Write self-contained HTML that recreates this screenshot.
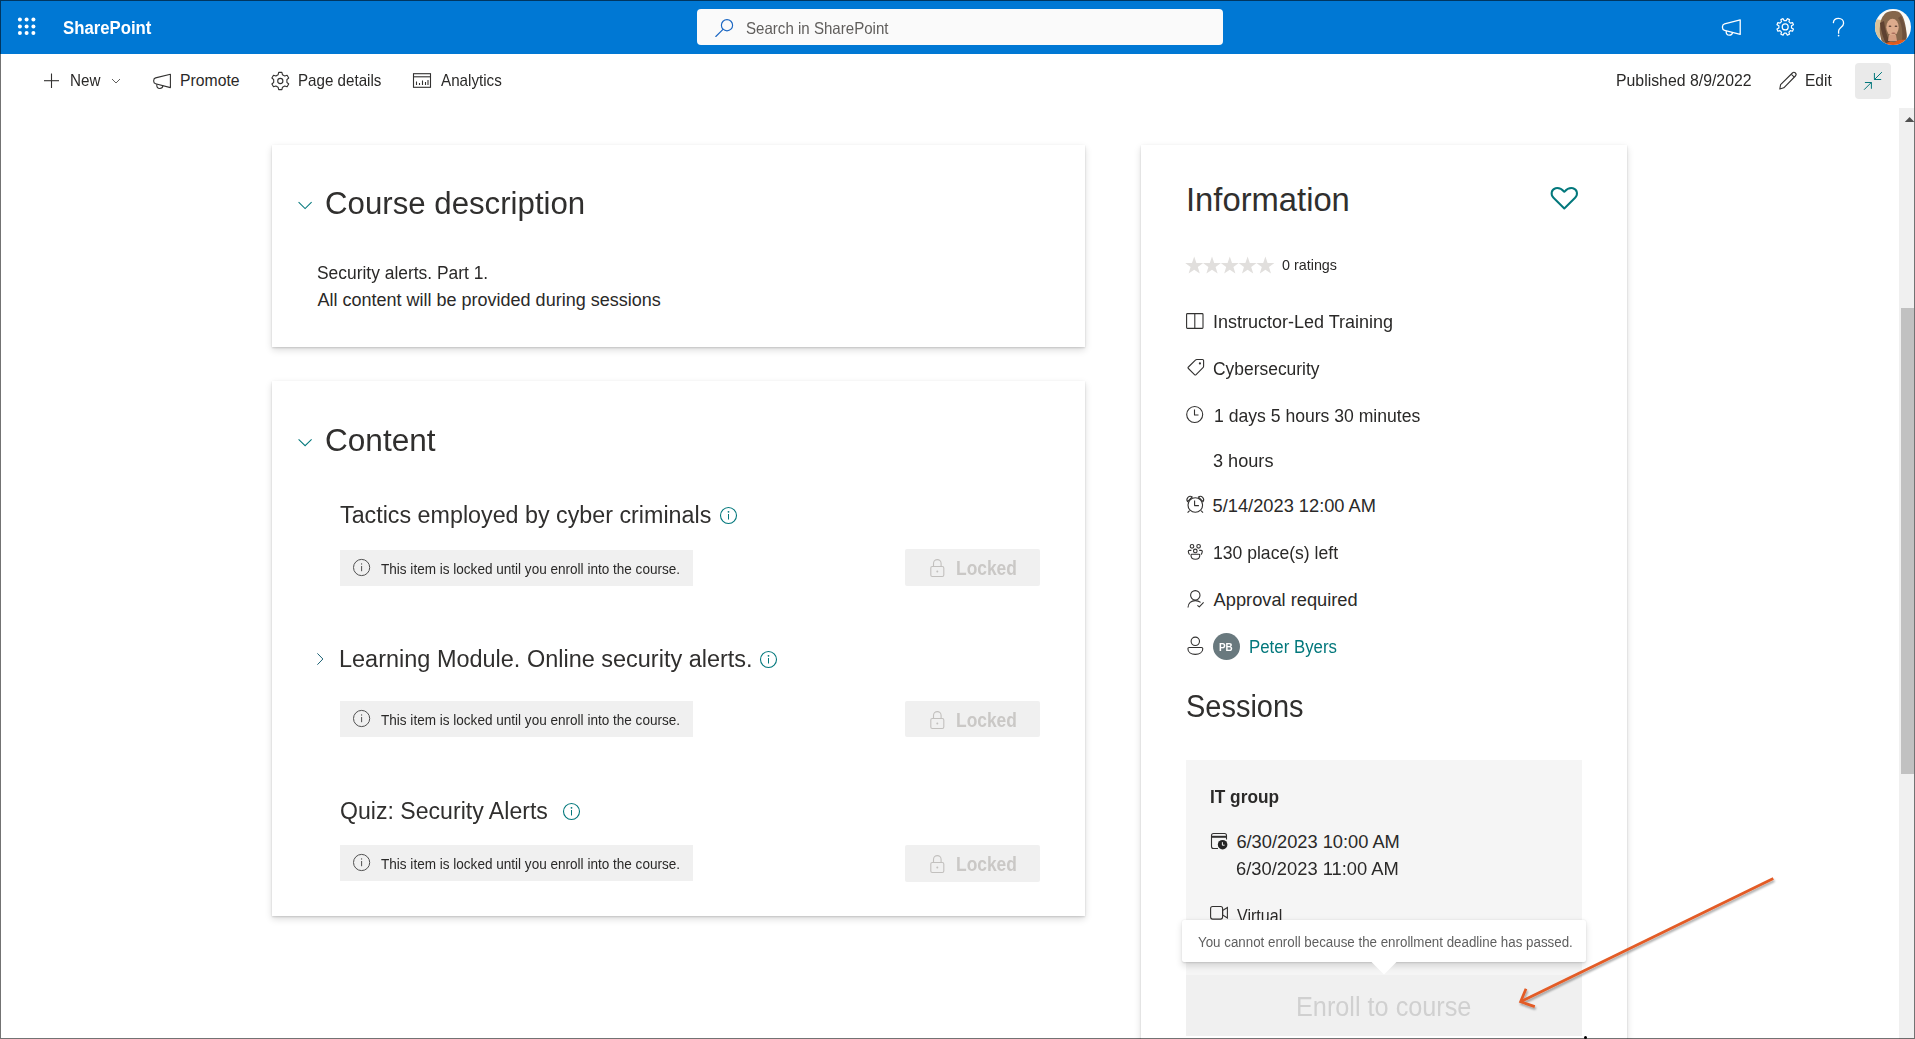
<!DOCTYPE html>
<html>
<head>
<meta charset="utf-8">
<style>
html,body{margin:0;padding:0;}
body{width:1915px;height:1039px;overflow:hidden;position:relative;background:#fff;font-family:"Liberation Sans",sans-serif;}
.a{position:absolute;}
.t{position:absolute;white-space:nowrap;line-height:1;font-family:"Liberation Sans",sans-serif;transform-origin:0 0;}
svg{position:absolute;overflow:visible;}
.card{position:absolute;background:#fff;box-shadow:0 3.2px 7.2px rgba(0,0,0,.14),0 0.6px 1.8px rgba(0,0,0,.15);}
.banner{position:absolute;background:#F0F0F0;}
.lockbtn{position:absolute;background:#F0F0F0;border-radius:2px;}
</style>
</head>
<body>
<!-- header -->
<div class="a" style="left:0;top:0;width:1915px;height:54px;background:#0078D4"></div>
<svg style="left:0;top:0" width="60" height="54">
  <g fill="#fff">
    <circle cx="19.9" cy="19.6" r="2"/><circle cx="26.6" cy="19.6" r="2"/><circle cx="33.4" cy="19.6" r="2"/>
    <circle cx="19.9" cy="26.4" r="2"/><circle cx="26.6" cy="26.4" r="2"/><circle cx="33.4" cy="26.4" r="2"/>
    <circle cx="19.9" cy="33.1" r="2"/><circle cx="26.6" cy="33.1" r="2"/><circle cx="33.4" cy="33.1" r="2"/>
  </g>
</svg>
<div class="a" style="left:697px;top:9px;width:526px;height:36px;background:#FAFAFA;border-radius:4px"></div>
<svg style="left:0;top:0" width="1" height="1">
  <g fill="none" stroke="#1a66c2" stroke-width="1.15" stroke-linecap="round">
    <circle cx="727" cy="25.2" r="5.6"/>
    <line x1="723" y1="29.3" x2="715.8" y2="36.5"/>
  </g>
</svg>
<!-- header right icons -->
<svg style="left:0;top:0" width="1" height="1">
  <g fill="none" stroke="#fff" stroke-width="1.3" stroke-linejoin="round">
    <path d="M1740.2 19.8 L1724.6 23.8 Q1722.5 24.4 1722.5 26.6 L1722.5 27.8 Q1722.5 29.9 1724.6 30.4 L1740.2 34.3 Z"/>
    <path d="M1726.3 30.9 C1725.8 33.6 1727.2 35.2 1729.4 35.2 C1731 35.2 1732.3 34.1 1732.6 32.4"/>
  </g>
  <g fill="none" stroke="#fff" stroke-width="1.2" stroke-linejoin="round">
    <circle cx="1785.2" cy="26.9" r="3"/>
    <path d="M1786.26 20.59 L1787.33 18.67 L1789.51 19.58 L1788.92 21.69 L1790.41 23.18 L1792.52 22.59 L1793.43 24.77 L1791.51 25.84 L1791.51 27.96 L1793.43 29.03 L1792.52 31.21 L1790.41 30.62 L1788.92 32.11 L1789.51 34.22 L1787.33 35.13 L1786.26 33.21 L1784.14 33.21 L1783.07 35.13 L1780.89 34.22 L1781.48 32.11 L1779.99 30.62 L1777.88 31.21 L1776.97 29.03 L1778.89 27.96 L1778.89 25.84 L1776.97 24.77 L1777.88 22.59 L1779.99 23.18 L1781.48 21.69 L1780.89 19.58 L1783.07 18.67 L1784.14 20.59 Z"/>
  </g>
  <g fill="none" stroke="#fff" stroke-width="1.3" stroke-linecap="round">
    <path d="M1833.4 22.6 C1833.6 20 1835.6 18.4 1838.5 18.4 C1841.5 18.4 1843.6 20.4 1843.6 23.2 C1843.6 25.6 1842 26.6 1840.4 27.9 C1839.2 28.9 1838.6 29.6 1838.6 31.2 L1838.6 33.2"/>
  </g>
  <circle cx="1838.6" cy="35.6" r="0.85" fill="#fff"/>
</svg>
<!-- avatar -->
<svg style="left:1875px;top:9px" width="36" height="36" viewBox="0 0 36 36">
  <defs>
    <clipPath id="avc"><circle cx="18" cy="18" r="18"/></clipPath>
    <filter id="avb" x="-20%" y="-20%" width="140%" height="140%"><feGaussianBlur stdDeviation="0.6"/></filter>
  </defs>
  <g clip-path="url(#avc)">
    <rect width="36" height="36" fill="#fbfaf7"/>
    <g filter="url(#avb)">
      <path d="M0 10 L6 11 L5 30 L0 34 Z" fill="#d9c39a"/>
      <path d="M9 6 C11 2 20 1 24 3 C28 6 30 12 31 20 C32 26 33 30 29 34 L8 36 C6 30 4 24 5 17 C5 12 7 8 9 6 Z" fill="#85664c"/>
      <path d="M5 14 C6 22 8 30 12 36 L16 36 C12 28 10 20 9 12 Z" fill="#5e4230"/>
      <path d="M23 9 C27 14 28 24 27 32 L31 31 C32 24 30 14 26 7 Z" fill="#6e513c"/>
      <ellipse cx="17.5" cy="18.2" rx="6.2" ry="8.4" fill="#dcab8c"/>
      <path d="M14 26 L21 26 L22 32 L13 32 Z" fill="#d49d80"/>
      <path d="M10 36 C12 33 16 32 19 33.5 C22 31.5 26 30 31 31 L31 36 Z" fill="#e05a1e"/>
      <ellipse cx="15" cy="17.2" rx="1.4" ry="0.7" fill="#5a4034"/>
      <ellipse cx="21" cy="17.2" rx="1.4" ry="0.7" fill="#5a4034"/>
      <ellipse cx="18.5" cy="24.2" rx="2.2" ry="0.7" fill="#a86a5a"/>
    </g>
  </g>
</svg>

<!-- command bar icons -->
<svg style="left:0;top:0" width="1" height="1">
  <g fill="none" stroke="#323130" stroke-width="1.1">
    <line x1="51.5" y1="73.5" x2="51.5" y2="88"/>
    <line x1="44" y1="80.7" x2="59" y2="80.7"/>
  </g>
  <path d="M112 79 L116 83 L120 79" fill="none" stroke="#605E5C" stroke-width="1"/>
  <g fill="none" stroke="#323130" stroke-width="1.1" stroke-linejoin="round">
    <path d="M170.4 74.3 L155.6 77.9 Q153.7 78.4 153.7 80.4 L153.7 81.3 Q153.7 83.2 155.6 83.7 L170.4 87.6 Z"/>
    <path d="M156.9 84.1 C156.3 86.9 157.6 88.5 159.8 88.5 C161.5 88.5 162.7 87.4 163 85.7"/>
  </g>
  <g transform="translate(280.3,81)" fill="none" stroke="#323130" stroke-width="1.1">
    <circle r="2.6"/>
    <path d="M-1.6 -8.6 L1.6 -8.6 L2.2 -6.2 L4.4 -5 L6.8 -5.8 L8.4 -3 L6.6 -1.3 L6.6 1.3 L8.4 3 L6.8 5.8 L4.4 5 L2.2 6.2 L1.6 8.6 L-1.6 8.6 L-2.2 6.2 L-4.4 5 L-6.8 5.8 L-8.4 3 L-6.6 1.3 L-6.6 -1.3 L-8.4 -3 L-6.8 -5.8 L-4.4 -5 L-2.2 -6.2 Z" stroke-linejoin="round"/>
  </g>
  <g fill="none" stroke="#323130" stroke-width="1.1">
    <rect x="413.5" y="73.7" width="17" height="13.6"/>
    <line x1="413.5" y1="76.8" x2="430.5" y2="76.8"/>
    <line x1="416.5" y1="81.5" x2="416.5" y2="85"/>
    <line x1="419.5" y1="83" x2="419.5" y2="85"/>
    <line x1="422.5" y1="80.5" x2="422.5" y2="85"/>
    <line x1="425.5" y1="82" x2="425.5" y2="85"/>
    <line x1="428" y1="80" x2="428" y2="85"/>
  </g>
  <g fill="none" stroke="#323130" stroke-width="1.1" stroke-linejoin="round">
    <path d="M1779.8 89 L1780.6 84.6 L1792.4 73 a2.1 2.1 0 0 1 3 3 L1783.8 87.8 Z"/>
    <line x1="1791.4" y1="74.3" x2="1794.3" y2="77.2"/>
  </g>
</svg>
<!-- collapse button -->
<div class="a" style="left:1855px;top:63px;width:36px;height:36px;background:#EAEAEA;border-radius:4px"></div>
<svg style="left:0;top:0" width="1" height="1">
  <g fill="none" stroke="#03787C" stroke-width="1" stroke-linecap="round">
    <line x1="1864.4" y1="89.4" x2="1871.2" y2="82.6"/>
    <path d="M1865.3 82.5 L1871.4 82.5 L1871.4 88.4"/>
    <line x1="1881.6" y1="72.4" x2="1874.6" y2="79.4"/>
    <path d="M1874.4 73.4 L1874.4 79.5 L1880.8 79.5"/>
  </g>
</svg>

<!-- scrollbar -->
<div class="a" style="left:1899px;top:108px;width:15px;height:931px;background:#F0F0F0"></div>
<div class="a" style="left:1901px;top:308px;width:13px;height:466px;background:#C1C1C1"></div>
<svg style="left:0;top:0" width="1" height="1">
  <path d="M1904.8 122 L1909.6 117 L1914.4 122 Z" fill="#505050"/>
</svg>

<!-- cards -->
<div class="card" style="left:272px;top:145px;width:813px;height:202px"></div>
<div class="card" style="left:272px;top:381px;width:813px;height:535px"></div>
<div class="card" style="left:1141px;top:145px;width:486px;height:920px"></div>

<!-- card chevrons -->
<svg style="left:0;top:0" width="1" height="1">
  <g fill="none" stroke="#03787C" stroke-width="1.05">
    <path d="M298.6 202.1 L305.1 208.5 L311.6 202.1"/>
    <path d="M298.6 439.3 L305.1 445.7 L311.6 439.3"/>
  </g>
  <path d="M317.4 653.4 L322.9 659 L317.4 664.7" fill="none" stroke="#1d6275" stroke-width="1"/>
  <!-- info icons teal -->
  <g fill="none" stroke="#03787C" stroke-width="1.1">
    <circle cx="728.5" cy="515.5" r="8"/>
    <circle cx="768.5" cy="659.5" r="8"/>
    <circle cx="571.5" cy="811.5" r="8"/>
  </g>
  <g fill="#03787C">
    <circle cx="728.5" cy="511.8" r="0.9"/><rect x="728" y="514" width="1" height="5.5"/>
    <circle cx="768.5" cy="655.8" r="0.9"/><rect x="768" y="658" width="1" height="5.5"/>
    <circle cx="571.5" cy="807.8" r="0.9"/><rect x="571" y="810" width="1" height="5.5"/>
  </g>
</svg>

<!-- banners & lock buttons -->
<div class="banner" style="left:340px;top:550px;width:353px;height:36px"></div>
<div class="banner" style="left:340px;top:701px;width:353px;height:36px"></div>
<div class="banner" style="left:340px;top:845px;width:353px;height:36px"></div>
<div class="lockbtn" style="left:905px;top:549px;width:135px;height:37px"></div>
<div class="lockbtn" style="left:905px;top:701px;width:135px;height:36px"></div>
<div class="lockbtn" style="left:905px;top:845px;width:135px;height:37px"></div>
<svg style="left:0;top:0" width="1" height="1">
  <g fill="none" stroke="#505050" stroke-width="1">
    <circle cx="361.6" cy="567.5" r="8.1"/>
    <circle cx="361.6" cy="718.5" r="8.1"/>
    <circle cx="361.6" cy="862.5" r="8.1"/>
  </g>
  <g fill="#505050">
    <rect x="361.1" y="563.3" width="1" height="1.3"/><rect x="361.1" y="566" width="1" height="5.2"/>
    <rect x="361.1" y="714.3" width="1" height="1.3"/><rect x="361.1" y="717" width="1" height="5.2"/>
    <rect x="361.1" y="858.3" width="1" height="1.3"/><rect x="361.1" y="861" width="1" height="5.2"/>
  </g>
  <g fill="none" stroke="#C2C0BE" stroke-width="1.1">
    <g id="lk1">
      <rect x="930.8" y="566.5" width="13" height="10" rx="1.5"/>
      <path d="M933.5 566.5 L933.5 563.4 a3.8 3.8 0 0 1 7.6 0 L941.1 566.5"/>
    </g>
    <g transform="translate(0,152)">
      <rect x="930.8" y="566.5" width="13" height="10" rx="1.5"/>
      <path d="M933.5 566.5 L933.5 563.4 a3.8 3.8 0 0 1 7.6 0 L941.1 566.5"/>
    </g>
    <g transform="translate(0,296)">
      <rect x="930.8" y="566.5" width="13" height="10" rx="1.5"/>
      <path d="M933.5 566.5 L933.5 563.4 a3.8 3.8 0 0 1 7.6 0 L941.1 566.5"/>
    </g>
  </g>
  <g fill="#C2C0BE">
    <circle cx="937.3" cy="571.5" r="1"/>
    <circle cx="937.3" cy="723.5" r="1"/>
    <circle cx="937.3" cy="867.5" r="1"/>
  </g>
</svg>

<!-- info card icons -->
<svg style="left:0;top:0" width="1" height="1">
  <!-- heart -->
  <path d="M1564.3 208.5 L1553.5 197.8 C1550.4 194.7 1551.2 189.3 1555.6 188.2 C1558.8 187.4 1561.6 188.8 1564.3 191.8 C1567 188.8 1569.8 187.4 1573 188.2 C1577.4 189.3 1578.2 194.7 1575.1 197.8 Z" fill="none" stroke="#03787C" stroke-width="2" stroke-linejoin="round"/>
  <!-- stars -->
  <g fill="#E1DFDD">
    <path id="star" d="M1194.2 256.5 L1196.4 262.9 L1203.2 263 L1197.8 267.1 L1199.8 273.6 L1194.2 269.7 L1188.6 273.6 L1190.6 267.1 L1185.2 263 L1192 262.9 Z"/>
    <path transform="translate(17.8,0)" d="M1194.2 256.5 L1196.4 262.9 L1203.2 263 L1197.8 267.1 L1199.8 273.6 L1194.2 269.7 L1188.6 273.6 L1190.6 267.1 L1185.2 263 L1192 262.9 Z"/>
    <path transform="translate(35.6,0)" d="M1194.2 256.5 L1196.4 262.9 L1203.2 263 L1197.8 267.1 L1199.8 273.6 L1194.2 269.7 L1188.6 273.6 L1190.6 267.1 L1185.2 263 L1192 262.9 Z"/>
    <path transform="translate(53.4,0)" d="M1194.2 256.5 L1196.4 262.9 L1203.2 263 L1197.8 267.1 L1199.8 273.6 L1194.2 269.7 L1188.6 273.6 L1190.6 267.1 L1185.2 263 L1192 262.9 Z"/>
    <path transform="translate(71.2,0)" d="M1194.2 256.5 L1196.4 262.9 L1203.2 263 L1197.8 267.1 L1199.8 273.6 L1194.2 269.7 L1188.6 273.6 L1190.6 267.1 L1185.2 263 L1192 262.9 Z"/>
  </g>
  <g fill="none" stroke="#323130" stroke-width="1.1" stroke-linejoin="round">
    <!-- book -->
    <rect x="1186.6" y="313.6" width="16.4" height="14.8" rx="0.8"/>
    <line x1="1194.8" y1="313.6" x2="1194.8" y2="328.4"/>
    <!-- tag -->
    <path d="M1188.4 367 L1195.4 360.1 Q1196 359.5 1196.8 359.5 L1202.5 359.5 Q1203.6 359.5 1203.6 360.6 L1203.6 366.3 Q1203.6 367.1 1203 367.7 L1196.1 374.6 Q1195.3 375.4 1194.5 374.6 L1188.4 368.5 Q1187.6 367.7 1188.4 367 Z"/>
    <!-- clock -->
    <circle cx="1194.7" cy="414.5" r="8"/>
    <path d="M1194.5 409.5 L1194.5 415 L1198.5 415"/>
    <!-- alarm -->
    <circle cx="1195.3" cy="505" r="7.3"/>
    <path d="M1194.6 500.6 L1194.6 505.6 L1198.9 505.6"/>
    <path d="M1187.6 501.6 A3.3 3.3 0 0 1 1192.2 497 Z"/>
    <path d="M1198.4 497 A3.3 3.3 0 0 1 1203 501.6 Z"/>
    <path d="M1189.6 510.6 L1187.6 512.6"/>
    <path d="M1201 510.6 L1203 512.6"/>
    <!-- people group -->
    <circle cx="1192" cy="546.3" r="1.8"/>
    <circle cx="1198.6" cy="546.3" r="1.8"/>
    <circle cx="1195.3" cy="550.9" r="1.8"/>
    <path d="M1191.4 550.4 L1189.3 550.4 Q1188.3 550.4 1188.3 551.5 Q1188.5 553.5 1189.6 554.6"/>
    <path d="M1199.2 550.4 L1201.3 550.4 Q1202.3 550.4 1202.3 551.5 Q1202.1 553.5 1201 554.6"/>
    <path d="M1191.7 554.3 L1199 554.3 Q1199.8 554.3 1199.8 555.2 C1199.8 557.7 1197.9 559.3 1195.4 559.3 C1192.9 559.3 1191 557.7 1191 555.2 Q1191 554.3 1191.7 554.3 Z"/>
    <!-- person check -->
    <circle cx="1195.3" cy="595.3" r="4.7"/>
    <path d="M1188 607.6 C1188 603.2 1191.3 600.6 1195.3 600.6 C1197.3 600.6 1199.2 601.3 1200.6 602.4"/>
    <path d="M1197.4 605.3 L1199.3 606.9 L1203.6 602.4"/>
    <!-- person -->
    <circle cx="1195.3" cy="641.3" r="4.2"/>
    <path d="M1189.2 647.5 L1201.5 647.5 Q1202.8 647.5 1202.8 648.8 C1202.8 652.3 1199.5 654.4 1195.3 654.4 C1191.1 654.4 1187.9 652.3 1187.9 648.8 Q1187.9 647.5 1189.2 647.5 Z"/>
  </g>
</svg>
<svg style="left:0;top:0" width="1" height="1"><circle cx="1199.9" cy="363.4" r="1.1" fill="#323130"/></svg>
<div class="a" style="left:1213px;top:633px;width:27px;height:27px;border-radius:50%;background:#69797E"></div>
<div class="t" style="left:1219.3px;top:641.7px;font-size:11.5px;font-weight:700;color:#fff;transform:scaleX(0.86)">PB</div>

<!-- session box -->
<div class="a" style="left:1186px;top:760px;width:396px;height:215px;background:#F5F5F5"></div>
<svg style="left:0;top:0" width="1" height="1">
  <g fill="none" stroke="#323130" stroke-width="1.1">
    <path d="M1218 848.5 L1213.5 848.5 a2 2 0 0 1 -2 -2 L1211.5 835.5 a2 2 0 0 1 2 -2 L1224.5 833.5 a2 2 0 0 1 2 2 L1226.5 839.5"/>
    <line x1="1211.5" y1="836.8" x2="1226.5" y2="836.8" stroke-width="2"/>
    <!-- video -->
    <rect x="1210.6" y="906.5" width="12" height="12.6" rx="2"/>
    <path d="M1222.6 910.5 L1227.4 907.5 L1227.4 918 L1222.6 915 Z"/>
  </g>
  <circle cx="1222.6" cy="844.7" r="5.6" fill="#F5F5F5"/><circle cx="1222.6" cy="844.7" r="4.8" fill="#242424"/>
  <path d="M1222.4 842.2 L1222.4 845.2 L1224.6 845.2" fill="none" stroke="#F5F5F5" stroke-width="1"/>
</svg>

<div class="t" style="left:1237.40px;top:906.50px;font-size:18.25px;font-weight:400;color:#2a2928;transform:scaleX(0.8800)">Virtual</div>

<!-- tooltip -->
<div class="a" style="left:1182px;top:920px;width:404px;height:42px;background:#fff;border-radius:2px;box-shadow:0 3.2px 7.2px rgba(0,0,0,.132),0 0.6px 1.8px rgba(0,0,0,.108)"></div>
<svg style="left:0;top:0" width="1" height="1">
  <path d="M1371 961.5 L1384 974.5 L1397 961.5 Z" fill="#fff"/>
</svg>

<!-- enroll button -->
<div class="a" style="left:1186px;top:975px;width:396px;height:61px;background:#F0F0F0"></div>

<div class="t" style="left:62.88px;top:18.90px;font-size:18.25px;font-weight:700;color:#fff;transform:scaleX(0.9179)">SharePoint</div>
<div class="t" style="left:745.89px;top:20.00px;font-size:16.5px;font-weight:400;color:#605E5C;transform:scaleX(0.9142)">Search in SharePoint</div>
<div class="t" style="left:69.84px;top:73.00px;font-size:15.75px;font-weight:400;color:#2a2928;transform:scaleX(0.9645)">New</div>
<div class="t" style="left:180.00px;top:73.00px;font-size:15.75px;font-weight:400;color:#2a2928">Promote</div>
<div class="t" style="left:298.44px;top:73.00px;font-size:15.75px;font-weight:400;color:#2a2928;transform:scaleX(0.9624)">Page details</div>
<div class="t" style="left:440.60px;top:73.00px;font-size:15.75px;font-weight:400;color:#2a2928;transform:scaleX(0.9651)">Analytics</div>
<div class="t" style="left:1616.29px;top:73.00px;font-size:15.75px;font-weight:400;color:#2a2928;transform:scaleX(1.0053)">Published 8/9/2022</div>
<div class="t" style="left:1805.42px;top:73.00px;font-size:15.75px;font-weight:400;color:#2a2928;transform:scaleX(0.9846)">Edit</div>
<div class="t" style="left:325.43px;top:187.00px;font-size:32.25px;font-weight:400;color:#302f2e;transform:scaleX(0.9677)">Course description</div>
<div class="t" style="left:316.53px;top:264.00px;font-size:18.0px;font-weight:400;color:#2a2928;transform:scaleX(0.9669)">Security alerts. Part 1.</div>
<div class="t" style="left:317.50px;top:291.00px;font-size:18.0px;font-weight:400;color:#2a2928">All content will be provided during sessions</div>
<div class="t" style="left:325.42px;top:424.00px;font-size:32.25px;font-weight:400;color:#302f2e;transform:scaleX(0.9786)">Content</div>
<div class="t" style="left:339.90px;top:503.00px;font-size:24.75px;font-weight:400;color:#302f2e;transform:scaleX(0.9406)">Tactics employed by cyber criminals</div>
<div class="t" style="left:381.00px;top:562.00px;font-size:14.75px;font-weight:400;color:#2a2928;transform:scaleX(0.9188)">This item is locked until you enroll into the course.</div>
<div class="t" style="left:955.64px;top:558.00px;font-size:20.25px;font-weight:700;color:#CAC8C6;transform:scaleX(0.8594)">Locked</div>
<div class="t" style="left:338.80px;top:647.00px;font-size:24.75px;font-weight:400;color:#302f2e;transform:scaleX(0.9484)">Learning Module. Online security alerts.</div>
<div class="t" style="left:381.00px;top:713.00px;font-size:14.75px;font-weight:400;color:#2a2928;transform:scaleX(0.9188)">This item is locked until you enroll into the course.</div>
<div class="t" style="left:955.64px;top:710.00px;font-size:20.25px;font-weight:700;color:#CAC8C6;transform:scaleX(0.8594)">Locked</div>
<div class="t" style="left:339.77px;top:799.00px;font-size:24.75px;font-weight:400;color:#302f2e;transform:scaleX(0.9330)">Quiz: Security Alerts</div>
<div class="t" style="left:381.00px;top:857.00px;font-size:14.75px;font-weight:400;color:#2a2928;transform:scaleX(0.9188)">This item is locked until you enroll into the course.</div>
<div class="t" style="left:955.64px;top:854.00px;font-size:20.25px;font-weight:700;color:#CAC8C6;transform:scaleX(0.8594)">Locked</div>
<div class="t" style="left:1186.00px;top:184.00px;font-size:32.75px;font-weight:400;color:#302f2e">Information</div>
<div class="t" style="left:1281.70px;top:257.00px;font-size:15.0px;font-weight:400;color:#2a2928;transform:scaleX(0.9561)">0 ratings</div>
<div class="t" style="left:1212.63px;top:313.10px;font-size:18.25px;font-weight:400;color:#2a2928;transform:scaleX(0.9856)">Instructor-Led Training</div>
<div class="t" style="left:1213.05px;top:360.00px;font-size:18.25px;font-weight:400;color:#2a2928;transform:scaleX(0.9550)">Cybersecurity</div>
<div class="t" style="left:1214.04px;top:406.50px;font-size:18.25px;font-weight:400;color:#2a2928;transform:scaleX(0.9638)">1 days 5 hours 30 minutes</div>
<div class="t" style="left:1212.61px;top:452.00px;font-size:18.25px;font-weight:400;color:#2a2928;transform:scaleX(0.9932)">3 hours</div>
<div class="t" style="left:1212.60px;top:497.00px;font-size:18.25px;font-weight:400;color:#2a2928">5/14/2023 12:00 AM</div>
<div class="t" style="left:1212.64px;top:544.00px;font-size:18.25px;font-weight:400;color:#2a2928;transform:scaleX(0.9628)">130 place(s) left</div>
<div class="t" style="left:1213.60px;top:591.30px;font-size:18.25px;font-weight:400;color:#2a2928">Approval required</div>
<div class="t" style="left:1249.08px;top:638.00px;font-size:18.25px;font-weight:400;color:#03787C;transform:scaleX(0.9223)">Peter Byers</div>
<div class="t" style="left:1185.60px;top:689.80px;font-size:32.25px;font-weight:400;color:#302f2e;transform:scaleX(0.8984)">Sessions</div>
<div class="t" style="left:1209.79px;top:787.00px;font-size:19.0px;font-weight:700;color:#2a2928;transform:scaleX(0.9080)">IT group</div>
<div class="t" style="left:1236.40px;top:833.00px;font-size:18.25px;font-weight:400;color:#2a2928">6/30/2023 10:00 AM</div>
<div class="t" style="left:1236.39px;top:860.00px;font-size:18.25px;font-weight:400;color:#2a2928;transform:scaleX(1.0050)">6/30/2023 11:00 AM</div>
<div class="t" style="left:1197.50px;top:935.00px;font-size:14.25px;font-weight:400;color:#5f5f5f;transform:scaleX(0.9361)">You cannot enroll because the enrollment deadline has passed.</div>
<div class="t" style="left:1295.63px;top:993.60px;font-size:27.0px;font-weight:400;color:#D0D0D0;transform:scaleX(0.9351)">Enroll to course</div>

<!-- red arrow -->
<svg style="left:0;top:0" width="1" height="1">
  <defs>
    <filter id="ash" x="-10%" y="-10%" width="130%" height="140%">
      <feGaussianBlur in="SourceAlpha" stdDeviation="1.3"/>
      <feOffset dx="1" dy="2.2" result="o"/>
      <feComponentTransfer><feFuncA type="linear" slope="0.35"/></feComponentTransfer>
      <feMerge><feMergeNode/><feMergeNode in="SourceGraphic"/></feMerge>
    </filter>
  </defs>
  <g filter="url(#ash)" fill="none" stroke="#E35B26" stroke-width="2.7" stroke-linecap="butt">
    <line x1="1773.3" y1="878.5" x2="1521.5" y2="1001.2"/>
    <path d="M1526 988.8 L1520.6 1001.8 L1534.8 1006.6" stroke-linejoin="miter"/>
  </g>
</svg>
<div class="a" style="left:1584px;top:1036px;width:3px;height:3px;border-radius:50%;background:#000"></div>

<!-- window border -->
<div class="a" style="left:0;top:0;width:1913px;height:1037px;border:1px solid rgba(0,0,0,.55)"></div>
</body>
</html>
